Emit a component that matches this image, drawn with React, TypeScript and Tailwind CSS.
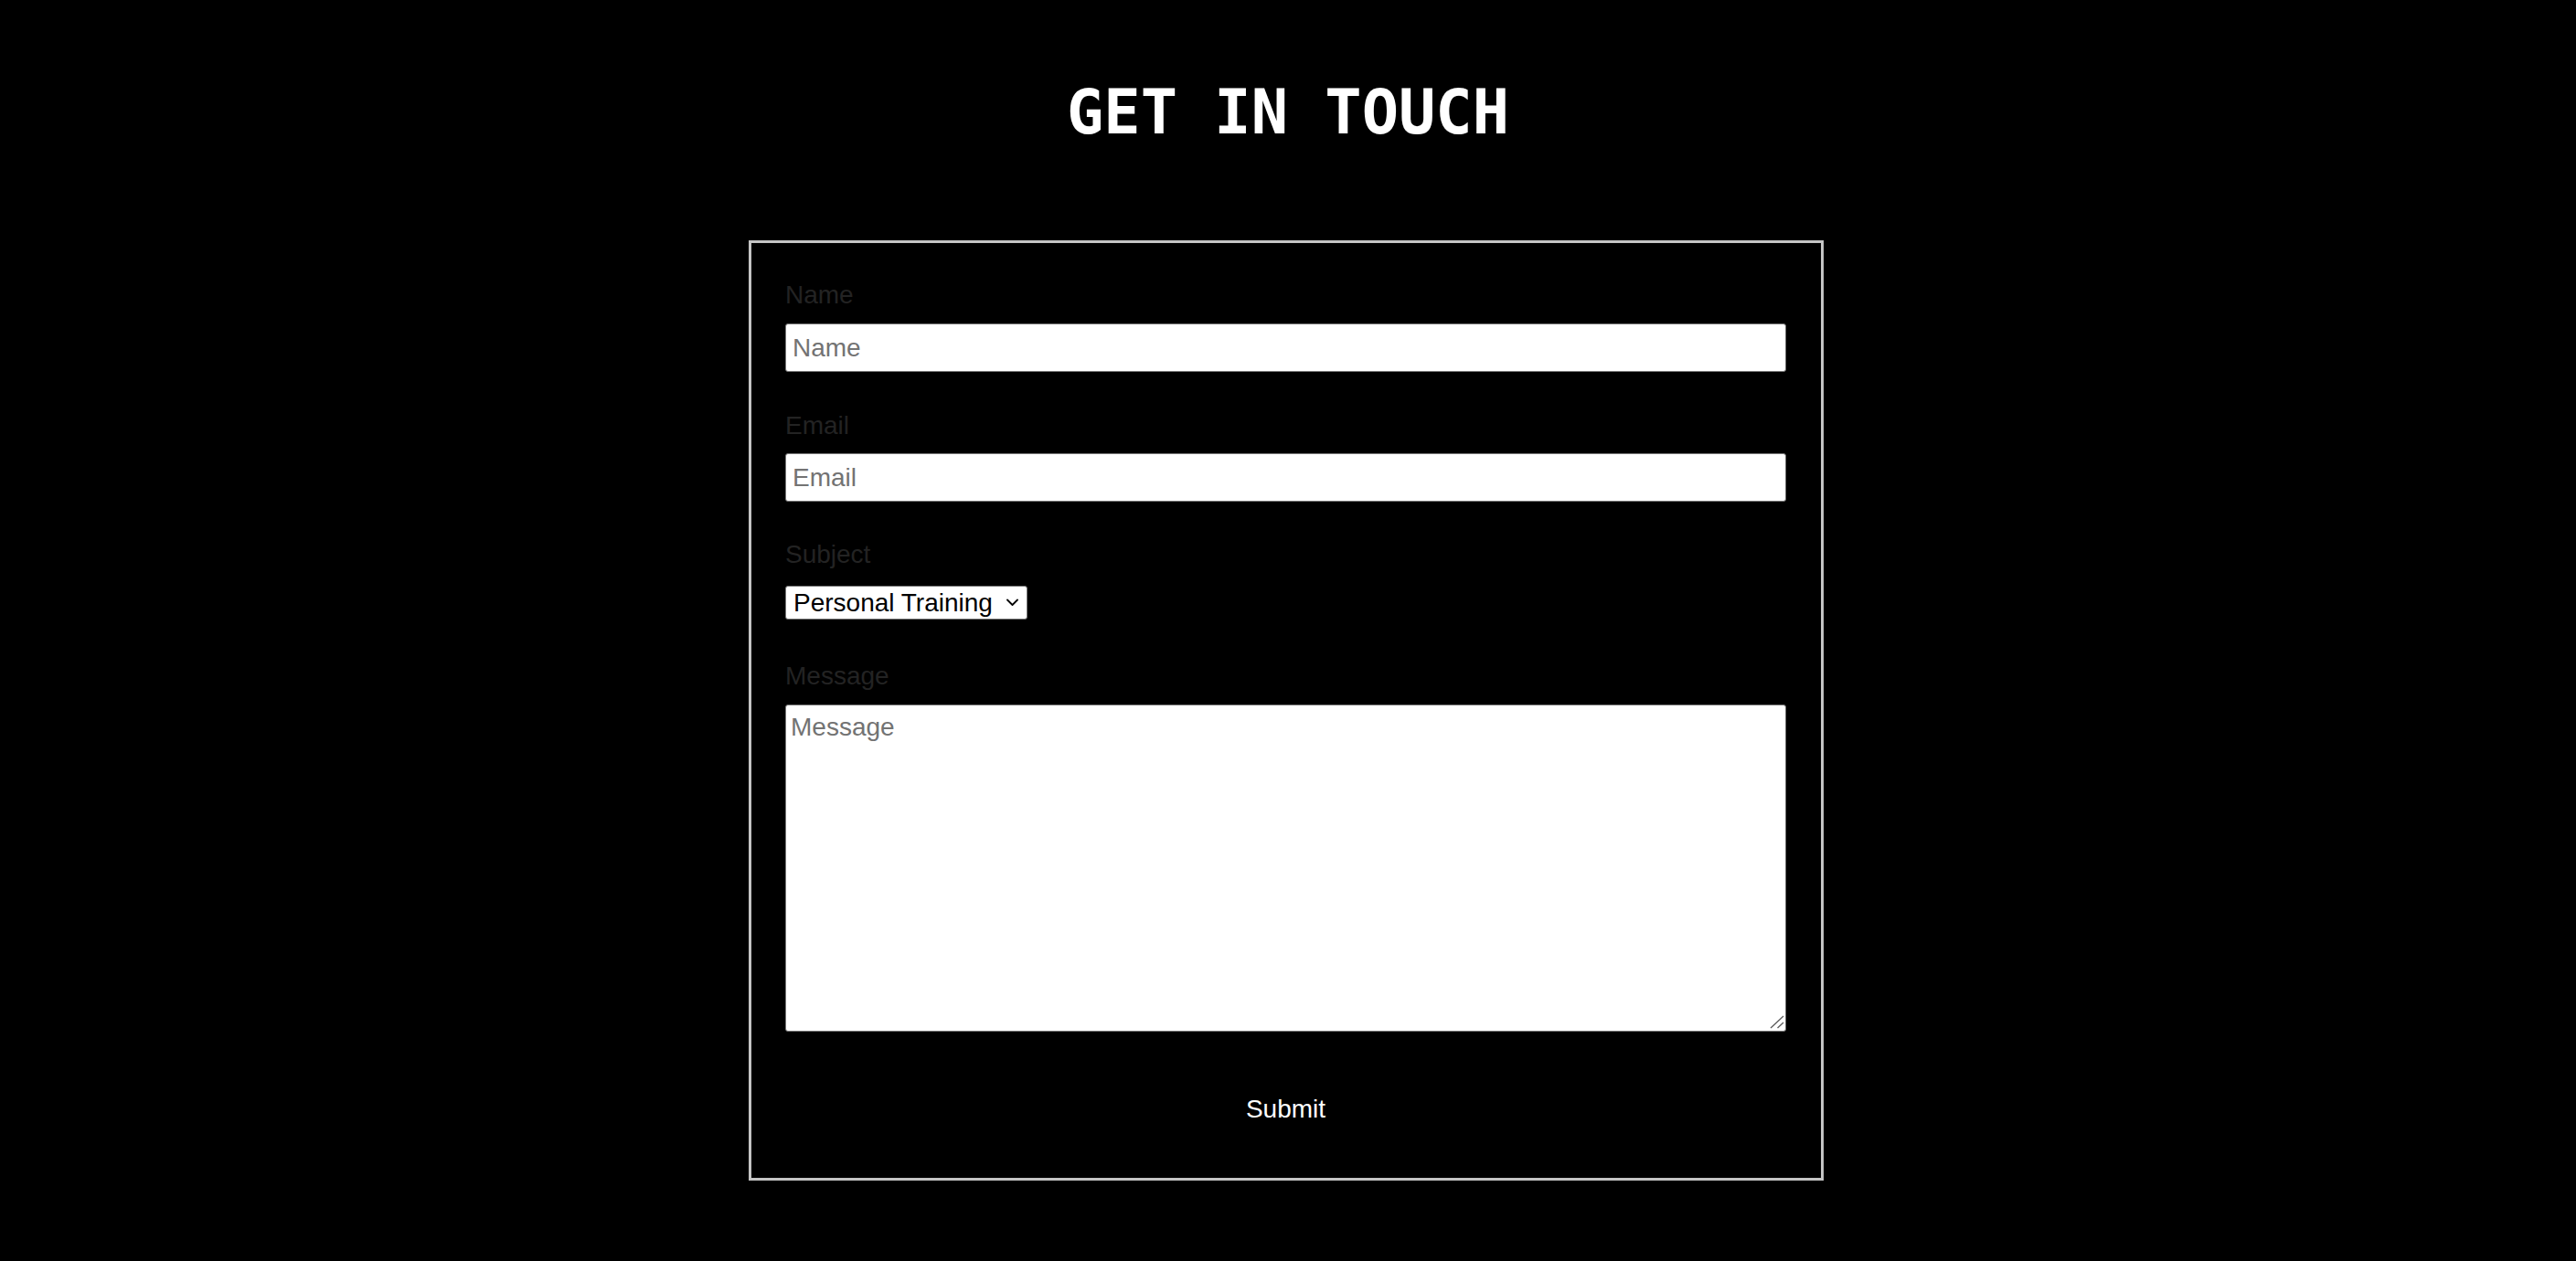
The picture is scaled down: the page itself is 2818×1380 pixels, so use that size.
import React from "react";

export default function App() {
  return (
    <div className="min-h-screen w-full bg-black" style={{ fontFamily: '"Liberation Sans", Arial, sans-serif' }}>
      <div className="flex justify-center pt-[90px]">
        <h1
          className="text-[67px] font-bold leading-[67px] text-white"
          style={{ fontFamily: '"DejaVu Sans Mono", monospace' }}
        >
          GET IN TOUCH
        </h1>
      </div>
      <div className="mt-[106px] flex justify-center pr-[4px]">
        <form
          className="flex w-[1176px] flex-col border-[3px] border-[#c4c4c4] pb-[59px] pl-[37px] pr-[38px] pt-[41px]"
          onSubmit={(e) => e.preventDefault()}
        >
          <label className="mb-[15px] block text-[28px] leading-[32px] text-[#232323]">Name</label>
          <input
            type="text"
            placeholder="Name"
            className="h-[53px] w-full rounded-[3px] border border-[#767676] bg-white pl-[7px] text-[28px] text-black placeholder:text-[#737373] outline-none"
          />

          <label className="mb-[14px] mt-[43px] block text-[28px] leading-[32px] text-[#232323]">Email</label>
          <input
            type="email"
            placeholder="Email"
            className="h-[53px] w-full rounded-[3px] border border-[#767676] bg-white pl-[7px] text-[28px] text-black placeholder:text-[#737373] outline-none"
          />

          <label className="mt-[42px] block text-[28px] leading-[32px] text-[#232323]">Subject</label>
          <div className="relative mt-[18px] h-[37px] w-[265px]">
            <select
              defaultValue="Personal Training"
              className="h-[37px] w-[265px] appearance-none rounded-[3px] border border-[#767676] bg-white pl-[8px] text-[28px] leading-[32px] text-black outline-none"
            >
              <option>Personal Training</option>
              <option>Group Classes</option>
              <option>Nutrition</option>
              <option>Other</option>
            </select>
            <svg
              className="pointer-events-none absolute right-[10px] top-[14px]"
              width="13"
              height="9"
              viewBox="0 0 13 9"
              fill="none"
            >
              <polyline points="1,1.5 6.5,7 12,1.5" stroke="#000" strokeWidth="1.8" strokeLinecap="round" strokeLinejoin="round" />
            </svg>
          </div>

          <label className="mb-[15px] mt-[46px] block text-[28px] leading-[32px] text-[#232323]">Message</label>
          <div className="relative h-[358px] w-full">
            <textarea
              placeholder="Message"
              className="h-[358px] w-full resize-none rounded-[3px] border border-[#767676] bg-white pl-[5px] pt-[8px] text-[28px] leading-[32px] text-black placeholder:text-[#737373] outline-none"
            />
            <svg
              className="pointer-events-none absolute bottom-[3px] right-[2px]"
              width="16"
              height="15"
              viewBox="0 0 16 15"
              fill="none"
            >
              <line x1="1" y1="14" x2="15" y2="1" stroke="#5a5a5a" strokeWidth="1.3" />
              <line x1="8.5" y1="14" x2="15" y2="8" stroke="#5a5a5a" strokeWidth="1.3" />
            </svg>
          </div>

          <div className="mt-[69px] flex justify-center">
            <button type="submit" className="bg-transparent text-[28px] leading-[32px] text-white">
              Submit
            </button>
          </div>
        </form>
      </div>
    </div>
  );
}
